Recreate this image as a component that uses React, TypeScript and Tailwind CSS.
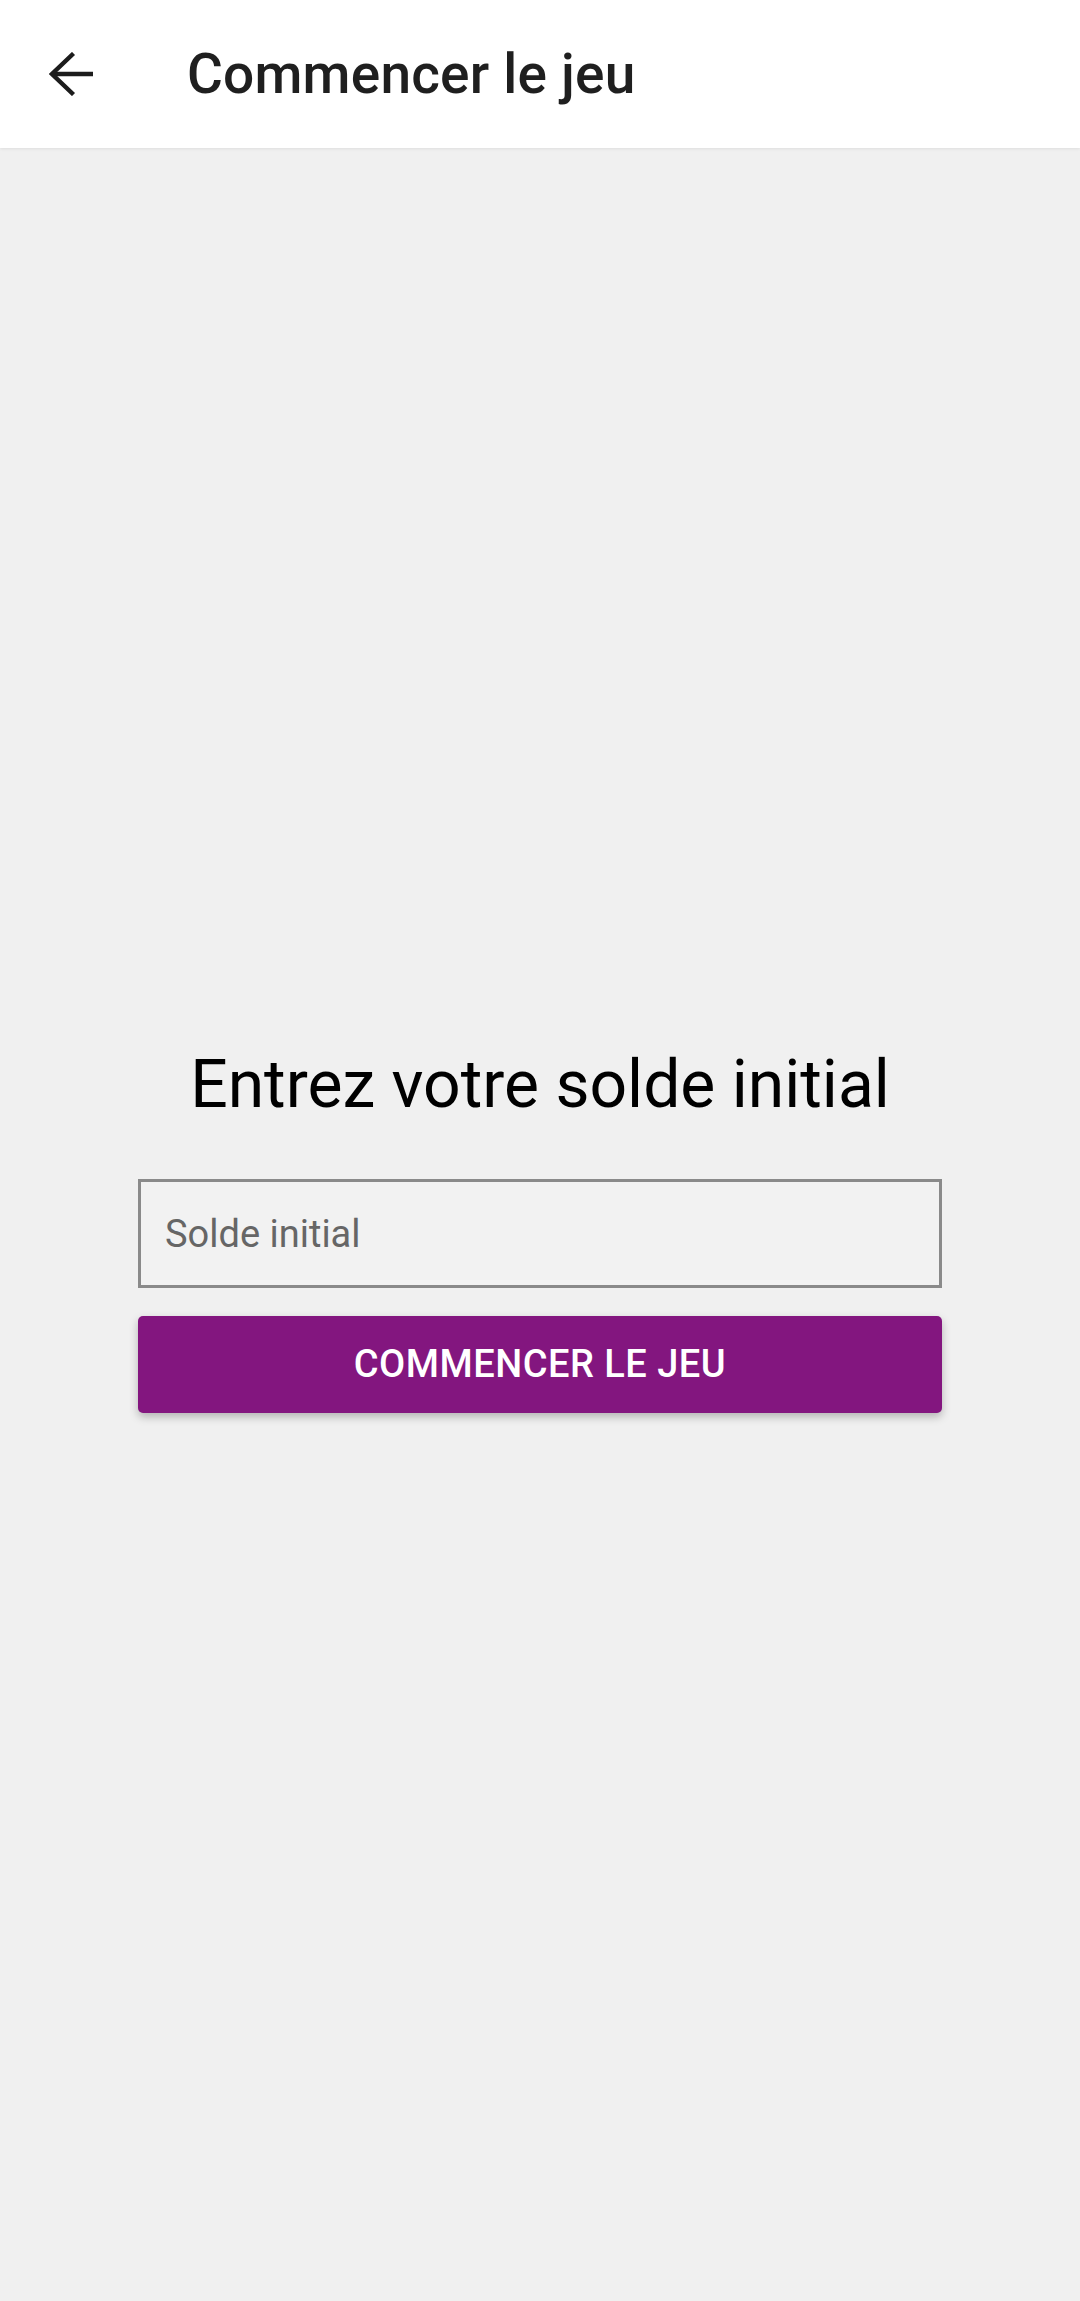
import { useState } from "react";

function BackArrow() {
  return (
    <svg width="44" height="44" viewBox="0 0 44 44" fill="none" stroke="#1c1c1c" strokeWidth="4.4" strokeLinecap="butt" strokeLinejoin="miter">
      <path d="M3 22H44" />
      <path d="M24.5 1.5L3 22L24.5 42.5" />
    </svg>
  );
}

export default function App() {
  const [balance, setBalance] = useState("");

  return (
    <div className="min-h-[2301px] w-[1080px] bg-[#f0f0f0] font-['Roboto',sans-serif]">
      {/* Toolbar */}
      <header className="h-[148px] bg-white flex items-center shadow-[0_1px_3px_rgba(0,0,0,0.08)]">
        <button className="w-[66px] h-[66px] ml-[38px] flex items-center justify-center">
          <BackArrow />
        </button>
        <h1 className="ml-[83px] text-[55px] font-medium text-[#1f1f1f] tracking-[0.2px] leading-none">Commencer le jeu</h1>
      </header>

      {/* Form */}
      <main className="pt-[904px] flex flex-col items-center">
        <h2 className="text-[66px] text-black leading-none">Entrez votre solde initial</h2>
        <div className="w-[804px] mt-[61px] flex flex-col">
          <input
            value={balance}
            onChange={(e) => setBalance(e.target.value)}
            placeholder="Solde initial"
            className="h-[109px] w-full border-[3px] border-[#8a8a8a] bg-[#f2f2f2] pl-[24px] text-[38px] text-[#222] placeholder:text-[#666] outline-none"
          />
          <button className="mt-[28px] h-[97px] w-full rounded-[5px] bg-[#83167f] text-white text-[38px] font-medium tracking-[0.5px] shadow-[0_4px_8px_rgba(0,0,0,0.25)]">
            COMMENCER LE JEU
          </button>
        </div>
      </main>
    </div>
  );
}
